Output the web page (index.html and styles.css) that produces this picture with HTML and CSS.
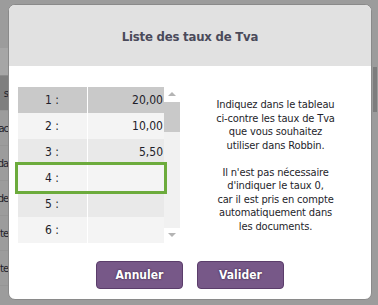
FILE: index.html
```html
<!DOCTYPE html>
<html lang="fr">
<head>
  <meta charset="UTF-8">
  <title>Liste des taux de Tva</title>
  <link rel="stylesheet" href="styles.css">
</head>
<body>
  <div class="backdrop">
    <div class="page-list">
      <div class="page-head"></div>
      <div class="page-row page-row-active"><span>s</span></div>
      <div class="page-row"><span>ac</span></div>
      <div class="page-row"><span>da</span></div>
      <div class="page-row"><span>de</span></div>
      <div class="page-row"><span>te</span></div>
      <div class="page-row"><span>te</span></div>
    </div>
    <div class="page-scroll"><span class="page-thumb"></span></div>
  </div>

  <div class="modal">
    <div class="modal-header">Liste des taux de Tva</div>

    <div class="modal-body">
      <div class="rates">
        <div class="rates-table">
          <div class="rate-row rate-row-head"><span class="rate-label">1 :</span><span class="rate-value">20,00</span></div>
          <div class="rate-row"><span class="rate-label">2 :</span><span class="rate-value">10,00</span></div>
          <div class="rate-row rate-row-alt"><span class="rate-label">3 :</span><span class="rate-value">5,50</span></div>
          <div class="rate-row rate-row-selected"><span class="rate-label">4 :</span><span class="rate-value"></span></div>
          <div class="rate-row rate-row-alt"><span class="rate-label">5 :</span><span class="rate-value"></span></div>
          <div class="rate-row"><span class="rate-label">6 :</span><span class="rate-value"></span></div>
        </div>
        <div class="scrollbar">
          <span class="arrow arrow-up"></span>
          <div class="track"><span class="thumb"></span></div>
          <span class="arrow arrow-down"></span>
        </div>
      </div>

      <div class="help">
        <p>Indiquez dans le tableau<br>ci-contre les taux de Tva<br>que vous souhaitez<br>utiliser dans Robbin.</p>
        <p>Il n'est pas nécessaire<br>d'indiquer le taux 0,<br>car il est pris en compte<br>automatiquement dans<br>les documents.</p>
      </div>
    </div>

    <div class="modal-footer">
      <button class="btn">Annuler</button>
      <button class="btn">Valider</button>
    </div>
  </div>
</body>
</html>
```

FILE: styles.css
```css
:root {
  --overlay: #9c9c9c;
  --header-bg: #e1e1e1;
  --title-color: #4a4a5a;
  --row-head: #c9c9c9;
  --row-light: #f4f4f4;
  --row-alt: #e9e9e9;
  --select-color: #6cab3c;
  --btn-bg: #775888;
  --btn-border: #5b3d6b;
  --text-color: #1e1e2a;
}

html, body {
  margin: 0;
  padding: 0;
}

body {
  width: 378px;
  height: 305px;
  overflow: hidden;
  position: relative;
  background-color: var(--overlay);
  font-family: "DejaVu Sans Condensed", "DejaVu Sans", sans-serif;
  color: var(--text-color);
}

/* dimmed page behind the dialog */
.backdrop {
  display: flex;
  justify-content: space-between;
  height: 100%;
}

.page-list {
  width: 8px;
  display: flex;
  flex-direction: column;
}

.page-head {
  height: 75px;
  border-bottom: 1px solid #8c8c8c;
  box-shadow: inset 0 -27px 0 #a6a6a6;
}

.page-row {
  height: 34px;
  display: flex;
  justify-content: flex-end;
  align-items: center;
  font-size: 11px;
  letter-spacing: -1px;
  white-space: nowrap;
  border-bottom: 1px solid #959595;
}

.page-row-active {
  background-color: #7f7f7f;
}

.page-scroll {
  width: 6px;
  padding-top: 67px;
}

.page-thumb {
  display: block;
  width: 4px;
  height: 45px;
  margin-left: 1px;
  background-color: #7d7d7d;
}

/* dialog */
.modal {
  position: absolute;
  left: 8px;
  top: 4px;
  width: 362px;
  height: 294px;
  border: 1px solid #8a8a8a;
  border-radius: 7px;
  background-color: white;
  overflow: hidden;
  display: flex;
  flex-direction: column;
}

.modal-header {
  height: 60px;
  background-color: var(--header-bg);
  display: flex;
  align-items: center;
  justify-content: center;
  font-size: 13px;
  font-weight: bold;
  letter-spacing: -0.2px;
  color: var(--title-color);
  padding-top: 1px;
}

.modal-body {
  display: flex;
  padding: 21px 0 0 9px;
  height: 170px;
}

.rates {
  display: flex;
  position: relative;
}

.rates-table {
  display: flex;
  flex-direction: column;
  width: 146px;
}

.rate-row {
  display: flex;
  height: 26px;
  background-color: var(--row-light);
  font-size: 12px;
  line-height: 26px;
}

.rate-row-head {
  background-color: var(--row-head);
}

.rate-row-alt {
  background-color: var(--row-alt);
}

.rate-row-selected {
  outline: 3px solid var(--select-color);
  position: relative;
  z-index: 1;
}

.rate-label {
  width: 70px;
  padding-left: 27px;
  box-sizing: border-box;
  border-right: 1px solid white;
}

.rate-value {
  flex: 1;
  text-align: right;
  padding-right: 1px;
}

.scrollbar {
  width: 16px;
  height: 156px;
  display: flex;
  flex-direction: column;
  align-items: center;
}

.arrow {
  width: 0;
  height: 0;
  border-left: 4px solid transparent;
  border-right: 4px solid transparent;
  margin: 5px 0 6px;
}

.arrow-up {
  border-bottom: 4px solid #b4b4b4;
}

.arrow-down {
  border-top: 4px solid #b4b4b4;
}

.track {
  flex: 1;
  width: 16px;
  background-color: #f1f1f1;
}

.thumb {
  display: block;
  height: 30px;
  background-color: #c9c9c9;
}

.help {
  flex: 1;
  text-align: center;
  font-size: 11px;
  letter-spacing: -0.15px;
  line-height: 13.5px;
  padding-top: 11px;
}

.help p {
  margin: 0 0 13.5px;
}

.modal-footer {
  display: flex;
  justify-content: center;
  gap: 14px;
  padding-top: 4px;
}

.btn {
  width: 87px;
  height: 28px;
  border: 1px solid var(--btn-border);
  border-radius: 4px;
  background-color: var(--btn-bg);
  color: white;
  font-family: inherit;
  font-size: 12px;
  font-weight: bold;
  text-shadow: 0 0 2px #2c1c38;
  cursor: pointer;
}
```
